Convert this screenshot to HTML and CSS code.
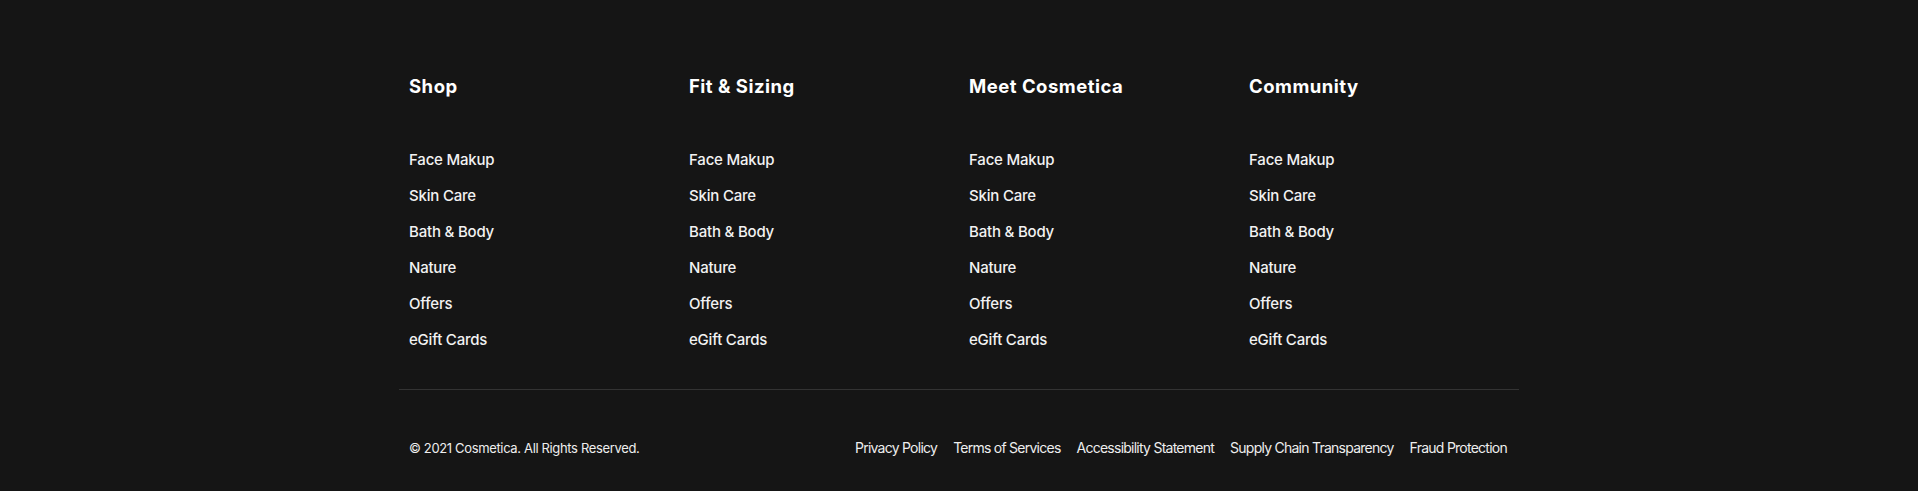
FILE: index.html
```html
<!DOCTYPE html>
<html lang="en">
<head>
<meta charset="utf-8">
<title>Cosmetica Footer</title>
<link rel="stylesheet" href="styles.css">
</head>
<body>
<footer class="footer">
  <div class="footer-inner">
    <div class="columns">
      <div class="col">
        <h4 class="col-title">Shop</h4>
        <ul class="col-links">
          <li><a href="#">Face Makup</a></li>
          <li><a href="#">Skin Care</a></li>
          <li><a href="#">Bath &amp; Body</a></li>
          <li><a href="#">Nature</a></li>
          <li><a href="#">Offers</a></li>
          <li><a href="#">eGift Cards</a></li>
        </ul>
      </div>
      <div class="col">
        <h4 class="col-title">Fit &amp; Sizing</h4>
        <ul class="col-links">
          <li><a href="#">Face Makup</a></li>
          <li><a href="#">Skin Care</a></li>
          <li><a href="#">Bath &amp; Body</a></li>
          <li><a href="#">Nature</a></li>
          <li><a href="#">Offers</a></li>
          <li><a href="#">eGift Cards</a></li>
        </ul>
      </div>
      <div class="col">
        <h4 class="col-title">Meet Cosmetica</h4>
        <ul class="col-links">
          <li><a href="#">Face Makup</a></li>
          <li><a href="#">Skin Care</a></li>
          <li><a href="#">Bath &amp; Body</a></li>
          <li><a href="#">Nature</a></li>
          <li><a href="#">Offers</a></li>
          <li><a href="#">eGift Cards</a></li>
        </ul>
      </div>
      <div class="col">
        <h4 class="col-title">Community</h4>
        <ul class="col-links">
          <li><a href="#">Face Makup</a></li>
          <li><a href="#">Skin Care</a></li>
          <li><a href="#">Bath &amp; Body</a></li>
          <li><a href="#">Nature</a></li>
          <li><a href="#">Offers</a></li>
          <li><a href="#">eGift Cards</a></li>
        </ul>
      </div>
    </div>
    <div class="bottom">
      <p class="copyright">© 2021 Cosmetica. All Rights Reserved.</p>
      <nav class="legal">
        <a href="#">Privacy Policy</a>
        <a href="#">Terms of Services</a>
        <a href="#">Accessibility Statement</a>
        <a href="#">Supply Chain Transparency</a>
        <a href="#">Fraud Protection</a>
      </nav>
    </div>
  </div>
</footer>
</body>
</html>
```
FILE: styles.css
```css
* { box-sizing: border-box; }
html, body {
  margin: 0;
  padding: 0;
  background: #151515;
}
.footer {
  background: #151515;
  color: #fff;
  font-family: Inter, "Noto Sans", sans-serif;
}
.footer-inner {
  width: 1120px;
  margin: 0 auto;
  padding-top: 75px;
}
.columns {
  display: grid;
  grid-template-columns: 280px 280px 280px 260px;
  padding: 0 0 31px 10px;
  border-bottom: 1px solid #333;
}
.col-title {
  margin: 0 0 45px;
  font-size: 18.5px;
  line-height: 22px;
  font-weight: 700;
  letter-spacing: 0.5px;
  color: #fff;
}
.col-links {
  list-style: none;
  margin: 0;
  padding: 0;
}
.col-links li {
  font-size: 15px;
  line-height: 36px;
  font-weight: 500;
  letter-spacing: -0.2px;
}
.col-links a {
  color: #f2f2f2;
  text-decoration: none;
}
.bottom {
  display: flex;
  justify-content: space-between;
  align-items: center;
  padding: 48px 12px 0 10px;
}
.copyright {
  margin: 0;
  font-size: 13px;
  line-height: 20px;
  letter-spacing: -0.35px;
  color: #eee;
}
.legal {
  display: flex;
  gap: 16px;
}
.legal a {
  font-size: 14px;
  line-height: 20px;
  color: #eee;
  text-decoration: none;
  letter-spacing: -0.75px;
}
```
